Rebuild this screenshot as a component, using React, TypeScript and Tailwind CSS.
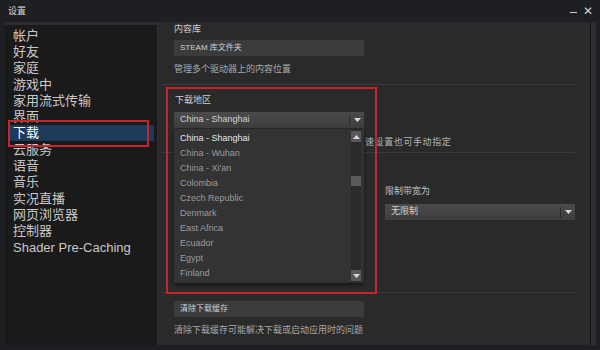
import type { ReactNode } from 'react';

const SIDEBAR = [
  '帐户',
  '好友',
  '家庭',
  '游戏中',
  '家用流式传输',
  '界面',
  '下载',
  '云服务',
  '语音',
  '音乐',
  '实况直播',
  '网页浏览器',
  '控制器',
  'Shader Pre-Caching',
];

const REGIONS = [
  'China - Shanghai',
  'China - Wuhan',
  "China - Xi'an",
  'Colombia',
  'Czech Republic',
  'Denmark',
  'East Africa',
  'Ecuador',
  'Egypt',
  'Finland',
];

const Arrow = ({ up = false }: { up?: boolean }) => (
  <svg width="7" height="4" viewBox="0 0 7 4" className={up ? 'rotate-180' : ''}>
    <path d="M0 0 H7 L3.5 4 Z" fill="#d8d8d8" />
  </svg>
);

const Select = ({ value, className = '' }: { value: string; className?: string }) => (
  <div
    className={`flex h-[16px] items-center bg-gradient-to-b from-[#4b4b4b] to-[#3d3d3d] text-[9px] text-[#d2d2d2] ${className}`}
  >
    <span className="flex-1 truncate pl-[6px]">{value}</span>
    <span className="h-[11px] w-px bg-[#2a2a2a]" />
    <span className="flex w-[14px] items-center justify-center">
      <Arrow />
    </span>
  </div>
);

const Separator = () => <div className="-ml-[13px] h-px bg-[#3a3a3b]" />;

const Button = ({ children }: { children: ReactNode }) => (
  <div className="flex h-[16px] w-[190px] items-center bg-[#3b3b3c] pl-[6px] text-[8px] text-[#cfcfcf]">
    {children}
  </div>
);

export default function App() {
  return (
    <div className="flex h-[350px] w-[600px] flex-col bg-[#1e1f22] font-['Liberation_Sans','Noto_Sans_CJK_SC',sans-serif] text-[#c4c4c4]">
      {/* 标题栏 */}
      <div className="flex h-[22px] items-center pl-[8px] pr-[7px]">
        <span className="mt-[1px] text-[9px] text-[#d6d6d6]">设置</span>
        <div className="ml-auto flex items-center gap-[6px] text-[#cfcfcf]">
          <span className="mt-[3px] h-px w-[7px] bg-[#cfcfcf]" />
          <span className="text-[12px] leading-none">✕</span>
        </div>
      </div>

      <div className="flex flex-1 pb-[5px] pl-[5px]">
        {/* 左侧导航 */}
        <div className="relative w-[152px] border-t-[3px] border-[#2b2c2e] bg-[#1a1a1b] pt-[2px]">
          {SIDEBAR.map((item) => (
            <div
              key={item}
              className={`mx-[3px] flex h-[16.3px] items-center pl-[5px] text-[13px] leading-none ${
                item === '下载' ? 'bg-[#1e3a5b] text-white' : 'text-[#c8c8c8]'
              }`}
            >
              {item}
            </div>
          ))}
          <div className="pointer-events-none absolute left-[3px] top-[95px] h-[27px] w-[141px] border-2 border-[#c4262b]" />
        </div>

        {/* 右侧内容 */}
        <div className="relative flex flex-1 flex-col border-l border-[#2f3032] bg-[#2a2a2b] pl-[16px] pr-[15px] pt-[1px]">
          <div className="h-[12px] text-[9px] leading-[12px] text-[#c8c8c8]">内容库</div>
          <div className="mt-[5px]">
            <Button>STEAM 库文件夹</Button>
          </div>
          <div className="mt-[7px] h-[12px] text-[9px] leading-[12px] text-[#a8a8a8]">管理多个驱动器上的内容位置</div>
          <div className="mt-[9px]">
            <Separator />
          </div>

          <div className="mt-[9px] h-[12px] pl-[1px] text-[9px] leading-[12px] text-[#d0d0d0]">下载地区</div>
          <Select value="China - Shanghai" className="mt-[6px] w-[190px]" />
          <div className="mt-[8px] flex h-[12px] whitespace-nowrap text-[9px] leading-[12px] text-[#b4b4b4]">
            <span className="w-[191px]" />
            <span className="tracking-[0.6px]">速设置也可手动指定</span>
          </div>
          <div className="mt-[4px]">
            <Separator />
          </div>

          <div className="mt-[32px] flex">
            <div className="w-[211px]" />
            <div className="flex-1">
              <div className="h-[12px] text-[9px] leading-[12px] text-[#c0c0c0]">限制带宽为</div>
              <Select value="无限制" className="mt-[7px]" />
            </div>
          </div>

          <div className="mt-[72px]">
            <Separator />
          </div>
          <div className="mt-[8px]">
            <Button>清除下载缓存</Button>
          </div>
          <div className="mt-[7px] h-[12px] text-[9px] leading-[12px] text-[#a8a8a8]">
            清除下载缓存可能解决下载或启动应用时的问题
          </div>

          {/* 下拉列表 */}
          <div className="absolute left-[16px] top-[107px] flex h-[154px] w-[190px] bg-[#333334] shadow-[0_2px_4px_rgba(0,0,0,0.5)]">
            <div className="flex-1 pt-[2px]">
              {REGIONS.map((r, i) => (
                <div
                  key={r}
                  className={`flex h-[15px] items-center pl-[6px] text-[9px] ${
                    i === 0 ? 'text-[#e6e6e6]' : 'text-[#9b9b9b]'
                  }`}
                >
                  {r}
                </div>
              ))}
            </div>
            <div className="mr-[3px] flex w-[10px] flex-col bg-[#2b2b2c] py-[2px]">
              <div className="flex h-[11px] items-center justify-center bg-[#58585a]">
                <Arrow up />
              </div>
              <div className="mt-[34px] h-[10px] bg-[#5a5a5c]" />
              <div className="mt-auto flex h-[11px] items-center justify-center bg-[#58585a]">
                <Arrow />
              </div>
            </div>
          </div>

          {/* 红色标记框 */}
          <div className="pointer-events-none absolute left-[8px] top-[65px] h-[207px] w-[211px] border-2 border-[#c4262b]" />
        </div>

        <div className="flex w-[10px]">
          <div className="w-px bg-[#161617]" />
          <div className="w-[5px] bg-[#2c2d2f]" />
        </div>
      </div>
    </div>
  );
}
